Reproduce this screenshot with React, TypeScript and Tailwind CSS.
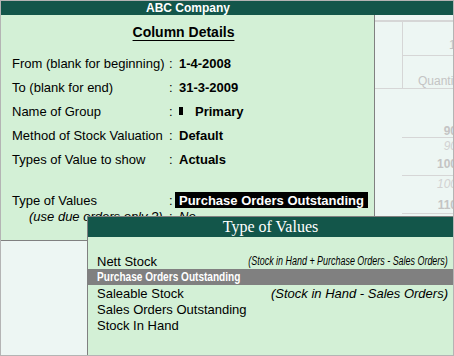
const rows = [
  { label: "From (blank for beginning)", value: "1-4-2008" },
  { label: "To (blank for end)", value: "31-3-2009" },
  { label: "Name of Group", value: "Primary", marker: true },
  { label: "Method of Stock Valuation", value: "Default" },
  { label: "Types of Value to show", value: "Actuals" },
];

const options = [
  { name: "Nett Stock", note: "(Stock in Hand + Purchase Orders - Sales Orders)", narrow: true },
  { name: "Purchase Orders Outstanding", selected: true },
  { name: "Saleable Stock", note: "(Stock in Hand - Sales Orders)" },
  { name: "Sales Orders Outstanding" },
  { name: "Stock In Hand" },
];

export default function App() {
  return (
    <div className="relative w-[454px] h-[356px] overflow-hidden border border-[#b4b4b4] bg-[#edf6f3] font-['Liberation_Sans',Arial,sans-serif] text-[13px] leading-none text-black">
      {/* Title bar */}
      <div className="flex h-[14px] bg-[#13564a]">
        <div className="flex w-[374px] items-center justify-center text-[12px] font-bold text-white">
          ABC Company
        </div>
      </div>

      <div className="flex">
        <LeftPanel />
        <ReportBehind />
      </div>

      <TypePopup />
    </div>
  );
}

function LeftPanel() {
  return (
    <div className="flex h-[226px] w-[374px] shrink-0 flex-col border-r border-b border-[#808080] bg-[#d3f0d6] pt-[8px]">
      <div className="flex h-[18px] items-center justify-center pr-[8px]">
        <span className="text-[14px] font-bold underline decoration-1 underline-offset-[3px]">
          Column Details
        </span>
      </div>

      <div className="mt-[10px] flex flex-col">
        {rows.map((r) => (
          <div key={r.label} className="flex h-[24px] items-center pl-[11px]">
            <span className="w-[157px] whitespace-nowrap">{r.label}</span>
            <span className="w-[6px]">:</span>
            {r.marker ? (
              <span className="flex items-center pl-[4px] font-bold">
                <span className="h-[8px] w-[4px] bg-black" />
                <span className="ml-[12px]">{r.value}</span>
              </span>
            ) : (
              <span className="pl-[4px] font-bold">{r.value}</span>
            )}
          </div>
        ))}
      </div>

      <div className="mt-[21px] flex h-[16px] items-center pl-[11px]">
        <span className="w-[157px]">Type of Values</span>
        <span className="w-[6px]">:</span>
        <span className="flex h-[16px] items-center bg-black px-[4px] font-bold whitespace-nowrap text-white">
          Purchase Orders Outstanding
        </span>
      </div>
      <div className="flex h-[16px] items-center pl-[11px] italic">
        <span className="w-[157px] pl-[17px] whitespace-nowrap">(use due orders only ?)</span>
        <span className="w-[6px] not-italic">:</span>
        <span className="pl-[4px]">No</span>
      </div>
    </div>
  );
}

function ReportBehind() {
  return (
    <div className="flex w-[78px] shrink-0 flex-col overflow-hidden text-[12px]">
      <div className="h-[5px]" />
      <div className="h-[2px] bg-[#d6d6d6]" />
      <div className="flex h-[67px] border-b border-[#d6d6d6]">
        <div className="w-[28px] shrink-0 border-r border-[#d6d6d6]" />
        <div className="flex min-w-0 flex-1 flex-col">
          <div className="flex h-[34px] items-end border-b border-[#d6d6d6] pb-[4px] pl-[46px] whitespace-nowrap text-[#c4c4c4]">
            1
          </div>
          <div className="flex flex-1 items-end pb-[1px] pl-[15px] whitespace-nowrap text-[#c4c4c4]">
            Quantity
          </div>
        </div>
      </div>
      <div className="flex">
        <div className="w-[27px] shrink-0" />
        <div className="flex w-[51px] shrink-0 flex-col">
          <div className="mr-[-4px] flex h-[49px] items-end justify-end border-b border-[#d6d6d6] font-bold text-[#c4c4c4]">
            90
          </div>
          <div className="mr-[-4px] flex h-[38px] flex-col items-end justify-between border-b border-[#d6d6d6] pt-[2px] pb-[5px]">
            <span className="italic text-[#d2d2d2]">90</span>
            <span className="font-bold text-[#c4c4c4]">100</span>
          </div>
          <div className="mr-[-4px] flex h-[38px] flex-col items-end justify-between border-b border-[#d6d6d6] pt-[2px] pb-[2px]">
            <span className="italic text-[#d2d2d2]">100</span>
            <span className="font-bold text-[#c4c4c4]">110</span>
          </div>
        </div>
      </div>
    </div>
  );
}

function TypePopup() {
  return (
    <div className="absolute top-[215px] right-0 bottom-0 left-[86px] flex flex-col border-t border-l border-[#808080] bg-[#d3f0d6]">
      <div className="flex h-[20px] items-center justify-center bg-[#13564a] font-['Liberation_Serif','Times_New_Roman',serif] text-[16px] text-white">
        Type of Values
      </div>
      <div className="flex flex-col pt-[16px]">
        {options.map((o) =>
          o.selected ? (
            <div key={o.name} className="flex h-[16px] items-center bg-[#808080] pl-[9px] whitespace-nowrap">
              <span className="inline-block origin-left scale-x-[0.84] text-[12px] font-bold text-white">
                {o.name}
              </span>
            </div>
          ) : (
            <div key={o.name} className="flex h-[16px] items-center justify-between pr-[5px] pl-[9px] whitespace-nowrap">
              <span>{o.name}</span>
              {o.note &&
                (o.narrow ? (
                  <span className="inline-block origin-right scale-x-[0.745] text-[12px] italic">{o.note}</span>
                ) : (
                  <span className="italic">{o.note}</span>
                ))}
            </div>
          )
        )}
      </div>
    </div>
  );
}
